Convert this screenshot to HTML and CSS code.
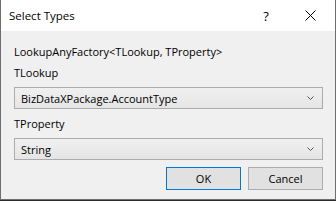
FILE: index.html
```html
<!DOCTYPE html>
<html>
<head>
<meta charset="utf-8">
<link rel="stylesheet" href="styles.css">
</head>
<body>
<div class="window">
  <div class="titlebar">
    <span class="title">Select Types</span>
    <span class="help">?</span>
    <span class="close">
      <svg width="11" height="11" viewBox="0 0 11 11"><path d="M0.5 0.5 L10.5 10.5 M10.5 0.5 L0.5 10.5" stroke="#000" stroke-width="1" fill="none"/></svg>
    </span>
  </div>
  <div class="content">
    <div class="heading">LookupAnyFactory&lt;TLookup, TProperty&gt;</div>
    <div class="label">TLookup</div>
    <div class="combo">
      <span class="combo-text">BizDataXPackage.AccountType</span>
      <svg class="chev" width="7" height="4" viewBox="0 0 7 4"><path d="M0.5 0.5 L3.5 3.5 L6.5 0.5" stroke="#555" stroke-width="1" fill="none"/></svg>
    </div>
    <div class="label label2">TProperty</div>
    <div class="combo">
      <span class="combo-text">String</span>
      <svg class="chev" width="7" height="4" viewBox="0 0 7 4"><path d="M0.5 0.5 L3.5 3.5 L6.5 0.5" stroke="#555" stroke-width="1" fill="none"/></svg>
    </div>
    <div class="buttons">
      <div class="btn btn-default">OK</div>
      <div class="btn">Cancel</div>
    </div>
  </div>
</div>
</body>
</html>
```
FILE: styles.css
```css
html, body {
  margin: 0;
  padding: 0;
  background: #2a2d30;
  width: 336px;
  height: 201px;
  overflow: hidden;
}
.window {
  width: 334px;
  height: 199px;
  border-left: 1px solid #6e6e6e;
  border-right: 1px solid #6e6e6e;
  border-bottom: 1px solid #6e6e6e;
  background: #f0f0f0;
  font-family: "Open Sans", sans-serif;
  font-size: 11px;
  color: #000;
  display: flex;
  flex-direction: column;
}
.titlebar {
  height: 31px;
  background: #fff;
  display: flex;
  align-items: center;
  padding-left: 8px;
}
.title {
  flex: 1;
  font-size: 11.5px;
}
.help {
  width: 12px;
  font-size: 13px;
  margin-right: 33px;
  text-align: center;
}
.close {
  width: 11px;
  height: 11px;
  display: flex;
  margin-right: 19px;
}
.content {
  padding: 12px 12px 0 13px;
  display: flex;
  flex-direction: column;
}
.heading {
  height: 17px;
  line-height: 17px;
}
.label {
  margin-top: 4px;
  height: 17px;
  line-height: 17px;
}
.label2 {
  margin-top: 6px;
}
.combo {
  margin-top: 6px;
  height: 20px;
  border: 1px solid #acacac;
  background: linear-gradient(#f0f0f0, #e5e5e5);
  display: flex;
  align-items: center;
  padding: 0 8px 0 6px;
}
.combo-text {
  flex: 1;
}
.chev {
  display: block;
}
.buttons {
  margin-top: 7px;
  display: flex;
  justify-content: flex-end;
  gap: 7px;
}
.btn {
  width: 73px;
  height: 21px;
  border: 1px solid #adadad;
  background: #e1e1e1;
  display: flex;
  align-items: center;
  justify-content: center;
}
.btn-default {
  border-color: #0078d7;
}
```
